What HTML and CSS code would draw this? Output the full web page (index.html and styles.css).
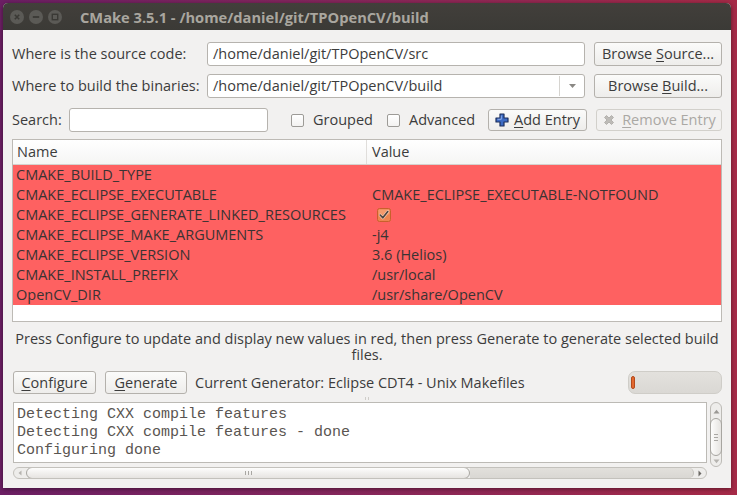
FILE: index.html
```html
<!DOCTYPE html>
<html>
<head>
<meta charset="utf-8">
<link rel="stylesheet" href="styles.css">
</head>
<body>
<div class="desktop">
  <div class="window">
    <div class="titlebar">
      <div class="wbtns">
        <span class="wbtn"><svg width="14" height="14" viewBox="0 0 14 14"><circle cx="7" cy="7" r="7" fill="#5b5a56"/><path d="M4.8 4.8L9.2 9.2M9.2 4.8L4.8 9.2" stroke="#3a3935" stroke-width="1.6"/></svg></span>
        <span class="wbtn"><svg width="14" height="14" viewBox="0 0 14 14"><circle cx="7" cy="7" r="7" fill="#5b5a56"/><path d="M3.8 7H10.2" stroke="#3a3935" stroke-width="1.8"/></svg></span>
        <span class="wbtn"><svg width="14" height="14" viewBox="0 0 14 14"><circle cx="7" cy="7" r="7" fill="#5b5a56"/><rect x="4.3" y="4.3" width="5.4" height="5.4" fill="none" stroke="#3a3935" stroke-width="1.4"/></svg></span>
      </div>
      <div class="wtitle">CMake 3.5.1 - /home/daniel/git/TPOpenCV/build</div>
    </div>
    <div class="content">
      <div class="paths">
        <span class="lbl">Where is the source code:</span>
        <div class="field">/home/daniel/git/TPOpenCV/src</div>
        <button class="btn"><span>Browse <u>S</u>ource...</span></button>
        <span class="lbl">Where to build the binaries:</span>
        <div class="field combo"><span class="combo-text">/home/daniel/git/TPOpenCV/build</span><span class="combo-arrow"><svg width="9" height="6" viewBox="0 0 9 6"><path d="M1 1L4.5 5L8 1Z" fill="#8a8884"/></svg></span></div>
        <button class="btn"><span>Browse <u>B</u>uild...</span></button>
      </div>
      <div class="searchrow">
        <span class="slbl">Search:</span>
        <div class="field sfield"></div>
        <label class="chk chk-grouped"><span class="box"></span>Grouped</label>
        <label class="chk chk-adv"><span class="box"></span>Advanced</label>
        <button class="btn btn-add"><svg width="14" height="14" viewBox="0 0 14 14"><path d="M5 1H9V5H13V9H9V13H5V9H1V5H5Z" fill="#3d6bc4" stroke="#1c2f5c" stroke-width="1.2" stroke-linejoin="round"/><path d="M6.3 2.5V6.3H2.5" fill="none" stroke="#8fb0ea" stroke-width="1"/></svg><span><u>A</u>dd Entry</span></button>
        <button class="btn btn-remove" disabled><svg width="14" height="14" viewBox="0 0 14 14"><path d="M2.5 4.5L4.5 2.5L7 5L9.5 2.5L11.5 4.5L9 7L11.5 9.5L9.5 11.5L7 9L4.5 11.5L2.5 9.5L5 7Z" fill="#bdbbb7" stroke="#a9a7a3" stroke-width="0.8" stroke-linejoin="round"/></svg><span><u>R</u>emove Entry</span></button>
      </div>
      <div class="table">
        <div class="thead">
          <div class="th th-name">Name</div>
          <div class="th th-value">Value</div>
        </div>
        <div class="tbody">
          <div class="tr"><div class="td">CMAKE_BUILD_TYPE</div><div class="td td-v"></div></div>
          <div class="tr"><div class="td">CMAKE_ECLIPSE_EXECUTABLE</div><div class="td td-v">CMAKE_ECLIPSE_EXECUTABLE-NOTFOUND</div></div>
          <div class="tr"><div class="td">CMAKE_ECLIPSE_GENERATE_LINKED_RESOURCES</div><div class="td td-v"><svg class="cbx" width="14" height="14" viewBox="0 0 14 14"><rect x="0.5" y="0.5" width="13" height="13" rx="2" fill="#ee8450" stroke="#c8602c"/><rect x="1.5" y="1.5" width="11" height="5" rx="1" fill="#f39a6c"/><path d="M3.2 7L5.8 9.8L10.8 3.6" fill="none" stroke="#f6c9b0" stroke-width="3" stroke-linecap="round" stroke-linejoin="round"/><path d="M3.2 7L5.8 9.8L10.8 3.6" fill="none" stroke="#4b4440" stroke-width="1.6" stroke-linecap="round" stroke-linejoin="round"/></svg></div></div>
          <div class="tr"><div class="td">CMAKE_ECLIPSE_MAKE_ARGUMENTS</div><div class="td td-v">-j4</div></div>
          <div class="tr"><div class="td">CMAKE_ECLIPSE_VERSION</div><div class="td td-v">3.6 (Helios)</div></div>
          <div class="tr"><div class="td">CMAKE_INSTALL_PREFIX</div><div class="td td-v">/usr/local</div></div>
          <div class="tr"><div class="td">OpenCV_DIR</div><div class="td td-v">/usr/share/OpenCV</div></div>
        </div>
      </div>
      <p class="msg">Press Configure to update and display new values in red, then press Generate to generate selected build files.</p>
      <div class="actions">
        <button class="btn btn-cfg"><span><u>C</u>onfigure</span></button>
        <button class="btn btn-gen"><span><u>G</u>enerate</span></button>
        <span class="gen-text">Current Generator: Eclipse CDT4 - Unix Makefiles</span>
        <div class="progress"><span class="pbar"></span></div>
      </div>
      <div class="splitter"><span></span><span></span></div>
      <div class="output">
        <div class="log">Detecting CXX compile features
Detecting CXX compile features - done
Configuring done</div>
        <div class="vscroll">
          <svg class="arr-up" width="7" height="5" viewBox="0 0 7 5"><path d="M0.5 4.5L3.5 0.8L6.5 4.5Z" fill="#9a9894"/></svg>
          <div class="vthumb"><span></span><span></span><span></span></div>
          <svg class="arr-down" width="7" height="5" viewBox="0 0 7 5"><path d="M0.5 0.5L3.5 4.2L6.5 0.5Z" fill="#b6b4b0"/></svg>
        </div>
        <div class="hscroll">
          <span class="harr-l"><svg width="4" height="6" viewBox="0 0 4 6"><path d="M3.5 0.5L0.5 3L3.5 5.5Z" fill="#b6b4b0"/></svg></span>
          <div class="hthumb"><span></span><span></span><span></span></div>
          <div class="htrack"></div>
          <span class="harr-r"><svg width="4" height="7" viewBox="0 0 4 7"><path d="M0.5 0.5L3.5 3.5L0.5 6.5Z" fill="#6b6965"/></svg></span>
        </div>
      </div>
    </div>
  </div>
</div>
</body>
</html>
```
FILE: styles.css
```css
* { box-sizing: border-box; }
html, body { margin: 0; padding: 0; }
body {
  width: 737px;
  height: 495px;
  overflow: hidden;
  font-family: "Open Sans", "Noto Sans", sans-serif;
  font-size: 14.5px;
  color: #3c3c3c;
}
.desktop {
  width: 737px;
  height: 495px;
  padding: 3px 0 0 3px;
  background: linear-gradient(90deg, #6c1f64 0%, #84265c 45%, #a52a47 100%);
}
.window {
  width: 728px;
  height: 485px;
  background: #f2f1f0;
  border-radius: 5px 5px 0 0;
  box-shadow: 0 1px 4px rgba(0,0,0,0.45);
  display: flex;
  flex-direction: column;
}
.titlebar {
  height: 27px;
  flex: none;
  background: linear-gradient(#423f3b, #3b3a36);
  border-radius: 5px 5px 0 0;
  display: flex;
  align-items: center;
}
.wbtns {
  display: flex;
  gap: 5px;
  margin-left: 7px;
}
.wbtn { display: block; width: 14px; height: 14px; }
.wbtn svg { display: block; }
.wtitle {
  margin-left: 18px;
  font-weight: 700;
  font-size: 14.66px;
  color: #a9a69f;
  line-height: 20px;
}
.content {
  flex: 1;
  padding: 12px 9px 0 9px;
  display: flex;
  flex-direction: column;
}
.paths {
  display: grid;
  grid-template-columns: 186px 378px 128px;
  grid-auto-rows: 24px;
  column-gap: 9px;
  row-gap: 8px;
  align-items: center;
}
.lbl { white-space: nowrap; line-height: 20px; }
.field {
  height: 24px;
  background: #fff;
  border: 1px solid #b6b3ae;
  border-radius: 3px;
  padding: 0 5px;
  line-height: 22px;
  white-space: nowrap;
  overflow: hidden;
}
.combo {
  display: flex;
  padding-right: 0;
}
.combo-text { flex: 1; }
.combo-arrow {
  width: 25px;
  border-left: 1px solid #d6d4d0;
  display: flex;
  align-items: center;
  justify-content: center;
  margin: 1px 0;
}
.combo-arrow svg { display: block; }
.btn {
  font-family: inherit;
  font-size: 14.5px;
  color: #3c3c3c;
  height: 24px;
  padding: 0;
  border: 1px solid #b4b1ac;
  border-radius: 3px;
  background: linear-gradient(#fbfbfa, #eeedeb);
  line-height: 20px;
  white-space: nowrap;
  display: flex;
  align-items: center;
  justify-content: center;
  gap: 4px;
}
.btn u { text-underline-offset: 2px; text-decoration-thickness: 1px; }
.searchrow {
  margin-top: 10px;
  height: 24px;
  display: flex;
  align-items: center;
}
.slbl { width: 57px; flex: none; line-height: 20px; }
.sfield { width: 199px; flex: none; }
.chk {
  display: flex;
  align-items: center;
  flex: none;
  line-height: 20px;
}
.chk .box {
  width: 13px;
  height: 13px;
  border: 1px solid #9d9b97;
  border-radius: 2px;
  background: linear-gradient(#ffffff, #f3f2f1);
  margin-right: 9px;
}
.chk-grouped { margin-left: 23px; width: 96px; }
.chk-adv { width: 101px; }
.btn-add { width: 99px; height: 22px; gap: 5px; }
.btn-add svg, .btn-remove svg { display: block; }
.btn-remove {
  width: 126px;
  height: 22px;
  margin-left: 9px;
  color: #aaa8a4;
  border-color: #d2d0cb;
  background: #f2f1f0;
  gap: 6px;
}
.table {
  margin-top: 7px;
  height: 183px;
  border: 1px solid #bdbab5;
  background: #fff;
  flex: none;
}
.thead {
  height: 25px;
  display: flex;
  background: linear-gradient(#ffffff, #f5f5f4);
  border-bottom: 1px solid #d4d2ce;
}
.th {
  line-height: 24px;
  padding-left: 4px;
}
.th-name {
  width: 354px;
  border-right: 1px solid #e0dedb;
}
.th-value { padding-left: 5px; }
.tr {
  height: 20px;
  display: flex;
  background: #fe6161;
  line-height: 20px;
}
.td { padding-left: 3px; width: 354px; white-space: nowrap; color: #3a3333; }
.td-v { width: auto; flex: 1; padding-left: 5px; display: flex; align-items: center; }
.cbx { display: block; margin-left: 5px; }
.msg {
  margin: 8px 0 0 0;
  line-height: 16px;
  text-align: center;
  padding: 1px 2px 0;
}
.actions {
  margin-top: 8px;
  height: 23px;
  display: flex;
  align-items: center;
}
.btn-cfg { width: 83px; height: 23px; margin-left: 1px; }
.btn-gen { width: 82px; height: 23px; margin-left: 9px; }
.gen-text { margin-left: 8px; line-height: 20px; }
.progress {
  margin-left: auto;
  width: 94px;
  height: 23px;
  border: 1px solid #cfcdc8;
  border-radius: 7px;
  background: linear-gradient(#e3e1dd, #dad8d4);
  display: flex;
  align-items: center;
  padding-left: 2px;
}
.pbar {
  width: 4px;
  height: 13px;
  border-radius: 2px;
  background: #e2682f;
  border: 1px solid #b44a1c;
}
.splitter {
  height: 8px;
  display: flex;
  justify-content: center;
  gap: 2px;
  padding-top: 3px;
}
.splitter span {
  width: 1px;
  height: 3px;
  background: #cfcdc9;
}
.output {
  margin-left: 1px;
  display: grid;
  grid-template-columns: 694px 12px;
  grid-template-rows: 61px 12px;
  column-gap: 3px;
  row-gap: 4px;
}
.log {
  grid-column: 1;
  grid-row: 1;
  border: 1px solid #bcbab5;
  background: #fff;
  font-family: "Liberation Mono", "Courier New", monospace;
  font-size: 15px;
  line-height: 18px;
  color: #5a5551;
  white-space: pre;
  padding: 3px 0 0 3px;
  overflow: hidden;
}
.vscroll {
  grid-column: 2;
  grid-row: 1;
  height: 65px;
  border: 1px solid #bdbbb6;
  border-radius: 6px;
  background: #eeedeb;
  display: flex;
  flex-direction: column;
  align-items: center;
}
.arr-up { display: block; margin-top: 6px; flex: none; }
.arr-down { display: block; margin-top: 3px; flex: none; }
.vthumb {
  margin-top: 4px;
  width: 12px;
  height: 38px;
  border: 1px solid #a7a5a0;
  border-radius: 6px;
  background: linear-gradient(90deg, #fdfdfc, #e6e4e1);
  display: flex;
  flex-direction: column;
  align-items: center;
  justify-content: center;
  gap: 2px;
  flex: none;
}
.vthumb span, .hthumb span { background: #a9a7a3; }
.vthumb span { width: 4px; height: 1px; }
.hscroll {
  grid-column: 1;
  grid-row: 2;
  height: 12px;
  border: 1px solid #c3c1bc;
  border-radius: 6px;
  background: #eeedeb;
  display: flex;
  align-items: center;
  overflow: hidden;
}
.harr-l { width: 12px; display: flex; justify-content: center; flex: none; }
.harr-r { width: 12px; display: flex; justify-content: center; flex: none; }
.harr-l svg, .harr-r svg { display: block; }
.hthumb {
  width: 444px;
  height: 12px;
  border: 1px solid #a7a5a0;
  border-radius: 6px;
  background: linear-gradient(#fdfdfc, #e6e4e1);
  display: flex;
  align-items: center;
  justify-content: center;
  gap: 2px;
  flex: none;
}
.hthumb span { width: 1px; height: 4px; }
.htrack {
  flex: 1;
  height: 10px;
  background: linear-gradient(#e2e0dc, #d9d7d3);
  border-radius: 0 6px 6px 0;
  border-right: 1px solid #c3c1bc;
}
```
